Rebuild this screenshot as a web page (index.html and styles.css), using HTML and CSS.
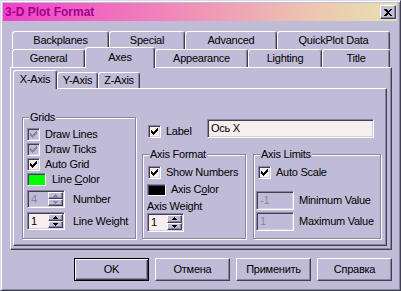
FILE: index.html
```html
<!DOCTYPE html>
<html lang="en">
<head>
    <meta charset="UTF-8">
    <title>3-D Plot Format</title>
    <link rel="stylesheet" href="styles.css">
</head>
<body>
    <div class="window">
        <div class="titlebar">
            <span class="title">3-D Plot Format</span>
            <div class="close">
                <svg width="8" height="7" viewBox="0 0 8 7" shape-rendering="crispEdges"><path d="M0 0h2l2 2 2-2h2L5 3.5 8 7H6L4 5 2 7H0l3-3.5z" fill="#000"/></svg>
            </div>
        </div>

        <div class="main">
            <!-- Main tabs, two rows -->
            <div class="tabs">
                <div class="tab-row">
                    <div class="tab tab-backplanes">Backplanes</div>
                    <div class="tab tab-special">Special</div>
                    <div class="tab tab-advanced">Advanced</div>
                    <div class="tab tab-quickplot">QuickPlot Data</div>
                </div>
                <div class="tab-row">
                    <div class="tab tab-general">General</div>
                    <div class="tab tab-axes active">Axes</div>
                    <div class="tab tab-appearance">Appearance</div>
                    <div class="tab tab-lighting">Lighting</div>
                    <div class="tab tab-title">Title</div>
                </div>
            </div>

            <div class="panel">
                <div class="tab-row sub">
                    <div class="tab tab-x active">X-Axis</div>
                    <div class="tab tab-y">Y-Axis</div>
                    <div class="tab tab-z">Z-Axis</div>
                </div>

                <div class="subpanel">
                    <!-- Grids -->
                    <div class="group grids">
                        <span class="group-title">Grids</span>
                        <div class="row check-row">
                            <span class="check disabled"><svg width="7" height="7" viewBox="0 0 7 7" shape-rendering="crispEdges"><path d="M6 0h1v1h-1zM5 1h2v1h-2zM0 2h1v1h-1zM4 2h3v1h-3zM0 3h2v1h-2zM3 3h3v1h-3zM0 4h5v1h-5zM1 5h3v1h-3zM2 6h1v1h-1z"/></svg></span>
                            <span>Draw Lines</span>
                        </div>
                        <div class="row check-row">
                            <span class="check disabled"><svg width="7" height="7" viewBox="0 0 7 7" shape-rendering="crispEdges"><path d="M6 0h1v1h-1zM5 1h2v1h-2zM0 2h1v1h-1zM4 2h3v1h-3zM0 3h2v1h-2zM3 3h3v1h-3zM0 4h5v1h-5zM1 5h3v1h-3zM2 6h1v1h-1z"/></svg></span>
                            <span>Draw Ticks</span>
                        </div>
                        <div class="row check-row">
                            <span class="check"><svg width="7" height="7" viewBox="0 0 7 7" shape-rendering="crispEdges"><path d="M6 0h1v1h-1zM5 1h2v1h-2zM0 2h1v1h-1zM4 2h3v1h-3zM0 3h2v1h-2zM3 3h3v1h-3zM0 4h5v1h-5zM1 5h3v1h-3zM2 6h1v1h-1z"/></svg></span>
                            <span>Auto Grid</span>
                        </div>
                        <div class="row swatch-row">
                            <span class="swatch green"></span>
                            <span>Line <u>C</u>olor</span>
                        </div>
                        <div class="row spin-row">
                            <div class="spin disabled">
                                <span class="spin-val">4</span>
                                <span class="spin-btns">
                                    <span class="spin-btn"><svg width="5" height="3" viewBox="0 0 5 3" shape-rendering="crispEdges"><path d="M2 0h1v1h1v1h1v1H0V2h1V1h1z"/></svg></span>
                                    <span class="spin-btn"><svg width="5" height="3" viewBox="0 0 5 3" shape-rendering="crispEdges"><path d="M0 0h5v1H4v1H3v1H2V2H1V1H0z"/></svg></span>
                                </span>
                            </div>
                            <span>Number</span>
                        </div>
                        <div class="row spin-row">
                            <div class="spin">
                                <span class="spin-val">1</span>
                                <span class="spin-btns">
                                    <span class="spin-btn"><svg width="5" height="3" viewBox="0 0 5 3" shape-rendering="crispEdges"><path d="M2 0h1v1h1v1h1v1H0V2h1V1h1z"/></svg></span>
                                    <span class="spin-btn"><svg width="5" height="3" viewBox="0 0 5 3" shape-rendering="crispEdges"><path d="M0 0h5v1H4v1H3v1H2V2H1V1H0z"/></svg></span>
                                </span>
                            </div>
                            <span>Line Weight</span>
                        </div>
                    </div>

                    <div class="right-col">
                        <div class="label-row">
                            <span class="check"><svg width="7" height="7" viewBox="0 0 7 7" shape-rendering="crispEdges"><path d="M6 0h1v1h-1zM5 1h2v1h-2zM0 2h1v1h-1zM4 2h3v1h-3zM0 3h2v1h-2zM3 3h3v1h-3zM0 4h5v1h-5zM1 5h3v1h-3zM2 6h1v1h-1z"/></svg></span>
                            <span class="label-text">Label</span>
                            <div class="field label-field">Ось X</div>
                        </div>

                        <div class="groups">
                            <!-- Axis Format -->
                            <div class="group format">
                                <span class="group-title">Axis Format</span>
                                <div class="row check-row">
                                    <span class="check"><svg width="7" height="7" viewBox="0 0 7 7" shape-rendering="crispEdges"><path d="M6 0h1v1h-1zM5 1h2v1h-2zM0 2h1v1h-1zM4 2h3v1h-3zM0 3h2v1h-2zM3 3h3v1h-3zM0 4h5v1h-5zM1 5h3v1h-3zM2 6h1v1h-1z"/></svg></span>
                                    <span>Show Numbers</span>
                                </div>
                                <div class="row swatch-row">
                                    <span class="swatch black"></span>
                                    <span>Axis C<u>o</u>lor</span>
                                </div>
                                <div class="caption">Axis Weight</div>
                                <div class="spin wide">
                                    <span class="spin-val">1</span>
                                    <span class="spin-btns">
                                        <span class="spin-btn"><svg width="5" height="3" viewBox="0 0 5 3" shape-rendering="crispEdges"><path d="M2 0h1v1h1v1h1v1H0V2h1V1h1z"/></svg></span>
                                        <span class="spin-btn"><svg width="5" height="3" viewBox="0 0 5 3" shape-rendering="crispEdges"><path d="M0 0h5v1H4v1H3v1H2V2H1V1H0z"/></svg></span>
                                    </span>
                                </div>
                            </div>

                            <!-- Axis Limits -->
                            <div class="group limits">
                                <span class="group-title">Axis Limits</span>
                                <div class="row check-row">
                                    <span class="check"><svg width="7" height="7" viewBox="0 0 7 7" shape-rendering="crispEdges"><path d="M6 0h1v1h-1zM5 1h2v1h-2zM0 2h1v1h-1zM4 2h3v1h-3zM0 3h2v1h-2zM3 3h3v1h-3zM0 4h5v1h-5zM1 5h3v1h-3zM2 6h1v1h-1z"/></svg></span>
                                    <span>Auto Scale</span>
                                </div>
                                <div class="row value-row first">
                                    <div class="field disabled">-1</div>
                                    <span>Minimum Value</span>
                                </div>
                                <div class="row value-row">
                                    <div class="field disabled">1</div>
                                    <span>Maximum Value</span>
                                </div>
                            </div>
                        </div>
                    </div>
                </div>
            </div>

            <div class="buttons">
                <div class="btn default">OK</div>
                <div class="btn">Отмена</div>
                <div class="btn">Применить</div>
                <div class="btn">Справка</div>
            </div>
        </div>
    </div>
</body>
</html>
```

FILE: styles.css
```css
/* Classic dialog look */
* {
    margin: 0;
    padding: 0;
    box-sizing: border-box;
}

body {
    background: #c0bcd8;
    font-family: "Liberation Sans", Arial, sans-serif;
    font-size: 11px;
    letter-spacing: -0.25px;
    color: #000;
    line-height: 13px;
    white-space: nowrap;
}

.window {
    width: 401px;
    height: 291px;
    border: 1px solid;
    border-color: #dcd8ec #404050 #404050 #dcd8ec;
    box-shadow: inset 1px 1px #fff, inset -1px -1px #8884a4;
    padding: 2px;
}

.titlebar {
    height: 18px;
    margin-right: 1px;
    display: flex;
    align-items: center;
    justify-content: space-between;
    padding: 0 1px 0 2px;
    background: linear-gradient(to right, #f040c8, #f08cb8 45%, #ecc8b0 80%, #e6e2b0);
}

.title {
    font-weight: bold;
    font-size: 12px;
    letter-spacing: 0;
    color: #a0008c;
}

.close {
    width: 16px;
    height: 14px;
    display: flex;
    align-items: center;
    justify-content: center;
    background: #c4c0dc;
    border: 1px solid;
    border-color: #fff #404050 #404050 #fff;
    box-shadow: inset -1px -1px #8884a4;
}

.main {
    padding: 10px 6px 0 7px;
}

/* Tabs */
.tabs {
    margin-left: 2px;
    width: 378px;
}

.tab-row {
    display: flex;
    height: 18px;
}

.tab {
    height: 18px;
    display: flex;
    align-items: center;
    justify-content: center;
    border-top: 1px solid #fff;
    border-left: 1px solid #fff;
    border-right: 1px solid #404050;
    box-shadow: inset -1px 0 #8884a4;
    border-radius: 3px 3px 0 0;
    background: #c0bcd8;
}

.tab.active {
    height: 21px;
    margin-top: -2px;
    padding-bottom: 2px;
    position: relative;
    z-index: 1;
}

.tab-backplanes { width: 97px; }
.tab-special { width: 76px; }
.tab-advanced { width: 92px; }
.tab-quickplot { width: 113px; }
.tab-general { width: 73px; }
.tab-axes { width: 70px; }
.tab-appearance { width: 93px; }
.tab-lighting { width: 74px; }
.tab-title { width: 68px; }

.tab-row.sub {
    height: 16px;
}

.sub .tab {
    height: 16px;
}

.sub .tab.active {
    height: 19px;
}

.tab-x { width: 44px; }
.tab-y { width: 41px; }
.tab-z { width: 42px; }

.panel {
    width: 382px;
    height: 183px;
    border: 1px solid;
    border-color: #fff #404050 #404050 #fff;
    box-shadow: inset -1px -1px #8884a4;
    padding: 4px 0 0 2px;
}

.subpanel {
    width: 374px;
    height: 158px;
    border: 1px solid;
    border-color: #fff #404050 #404050 #fff;
    box-shadow: inset -1px -1px #8884a4;
    display: flex;
    align-items: flex-end;
    gap: 6px;
    padding: 0 0 6px 8px;
}

/* Group boxes */
.group {
    position: relative;
    border: 1px solid #8884a4;
    box-shadow: inset 1px 1px #fff, 1px 1px #fff;
}

.group-title {
    position: absolute;
    top: -7px;
    left: 6px;
    padding: 0 1px;
    background: #c0bcd8;
}

.grids {
    width: 114px;
    height: 122px;
    padding: 10px 0 0 4px;
}

.row {
    display: flex;
    align-items: center;
}

.check-row {
    height: 13px;
    gap: 5px;
    margin-bottom: 2px;
}

.swatch-row {
    gap: 6px;
    margin-top: 2px;
}

.spin-row {
    gap: 8px;
    margin-top: 4px;
}

/* Controls */
.check {
    width: 13px;
    height: 13px;
    flex: none;
    display: flex;
    align-items: center;
    justify-content: center;
    border: 1px solid;
    border-color: #8884a4 #fff #fff #8884a4;
    box-shadow: inset 1px 1px #404050, inset -1px -1px #d4d0e4;
    background: #f8eeee;
}

.check svg {
    fill: #000;
}

.check.disabled {
    background: #c0bcd8;
}

.check.disabled svg {
    fill: #8884a4;
}

.swatch {
    width: 19px;
    height: 13px;
    flex: none;
    border: 1px solid;
    border-color: #8884a4 #fff #fff #8884a4;
    box-shadow: inset 1px 1px #404050;
}

.swatch.green {
    background: #00ff00;
}

.swatch.black {
    height: 12px;
    background: #000;
}

.spin {
    width: 38px;
    height: 18px;
    flex: none;
    display: flex;
    border: 1px solid;
    border-color: #8884a4 #fff #fff #8884a4;
    box-shadow: inset 1px 1px #404050, inset -1px -1px #d4d0e4;
    padding: 1px;
    background: #f8eeee;
}

.spin.wide {
    width: 37px;
    height: 19px;
}

.spin-val {
    flex: 1;
    padding-left: 2px;
    display: flex;
    align-items: center;
}

.spin-btns {
    width: 15px;
    display: flex;
    flex-direction: column;
}

.spin-btn {
    flex: 1;
    display: flex;
    align-items: center;
    justify-content: center;
    background: #c0bcd8;
    border: 1px solid;
    border-color: #fff #404050 #404050 #fff;
    box-shadow: inset -1px -1px #8884a4;
}

.spin-btn svg {
    fill: #000;
}

.spin.disabled {
    background: #c0bcd8;
    color: #8884a4;
}

.spin.disabled svg {
    fill: #8884a4;
}

.field {
    height: 19px;
    flex: none;
    display: flex;
    align-items: center;
    padding-left: 3px;
    border: 1px solid;
    border-color: #8884a4 #fff #fff #8884a4;
    box-shadow: inset 1px 1px #404050, inset -1px -1px #d4d0e4;
    background: #f8eeee;
}

.field.disabled {
    width: 38px;
    background: #c0bcd8;
    color: #8884a4;
}

/* Right column */
.right-col {
    width: 239px;
    display: flex;
    flex-direction: column;
}

.label-row {
    height: 19px;
    display: flex;
    align-items: flex-end;
    padding-left: 6px;
    margin-bottom: 16px;
}

.label-text {
    margin-left: 5px;
}

.label-field {
    width: 167px;
    margin-left: auto;
    margin-right: 7px;
}

.groups {
    display: flex;
    gap: 7px;
}

.format {
    width: 104px;
    height: 85px;
    padding: 11px 0 0 4px;
}

.format .check-row {
    padding-left: 1px;
}

.format .swatch-row {
    gap: 5px;
    margin-top: 4px;
}

.caption {
    margin-top: 4px;
}

.limits {
    width: 128px;
    height: 85px;
    padding: 11px 0 0 2px;
}

.limits .check-row {
    padding-left: 2px;
}

.value-row {
    gap: 5px;
    margin-top: 2px;
}

.value-row.first {
    margin-top: 12px;
}

/* Dialog buttons */
.buttons {
    display: flex;
    justify-content: flex-end;
    gap: 6px;
    margin-top: 8px;
}

.btn {
    width: 75px;
    height: 23px;
    display: flex;
    align-items: center;
    justify-content: center;
    border: 1px solid;
    border-color: #fff #404050 #404050 #fff;
    box-shadow: inset -1px -1px #8884a4;
}

.btn.default {
    border-color: #000;
    box-shadow: inset 1px 1px #fff, inset -1px -1px #404050, inset -2px -2px #8884a4;
}
```
